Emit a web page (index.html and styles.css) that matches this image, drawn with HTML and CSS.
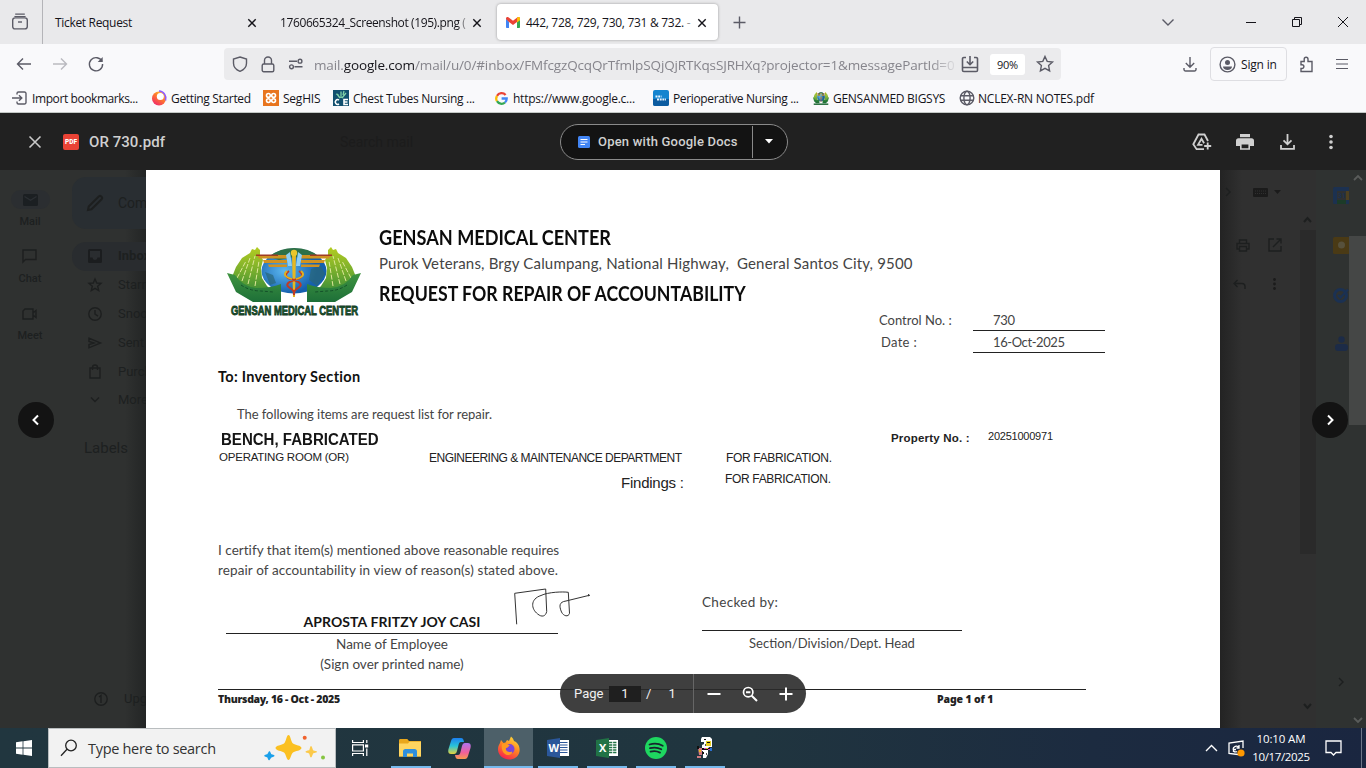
FILE: index.html
```html
<!DOCTYPE html>
<html lang="en">
<head>
<meta charset="utf-8">
<title>442, 728, 729, 730, 731 &amp; 732. - Gmail</title>
<link rel="stylesheet" href="styles.css">
</head>
<body>
<header class="tabs">
  <div class="tab-view"><svg width="18" height="18" viewBox="0 0 18 18" class="ln"><path d="M4.2 1.2h9.6M3.4 3.5h11.2" stroke-width="1.2"/><rect x="1.7" y="4.9" width="14.6" height="11" rx="2.4"/><path d="M7 9h4"/></svg></div>
  <div class="tab tab-a"><span class="t1">Ticket Request</span><svg class="x" viewBox="0 0 10 10"><path d="M1.3 1.3l7.4 7.4M8.7 1.3L1.3 8.7"/></svg></div>
  <div class="tab tab-b"><span class="t2">1760665324_Screenshot (195).png (</span><svg class="x" viewBox="0 0 10 10"><path d="M1.3 1.3l7.4 7.4M8.7 1.3L1.3 8.7"/></svg></div>
  <div class="tab tab-c"><svg width="14" height="11" viewBox="0 0 14 11"><path fill="#4285f4" d="M0 1.5V10c0 .6.4 1 1 1h2V4.5z"/><path fill="#34a853" d="M11 4.5V11h2c.6 0 1-.4 1-1V1.5z"/><path fill="#ea4335" d="M0 2V1.4C0 .2 1.5-.5 2.4.3L7 3.7 11.6.3C12.500-.5 14 .2 14 1.400V2l-3 3-4 2.900L3 5z"/><path fill="#fbbc04" d="M11 1v4.500l3-2.300V1.400C14 0 12.500-.4 11.600.3z"/></svg><span class="t3">442, 728, 729, 730, 731 &amp; 732. <i>-</i></span><svg class="x" viewBox="0 0 10 10"><path d="M1.3 1.3l7.4 7.4M8.7 1.3L1.3 8.7"/></svg></div>
  <svg class="plus ln" width="13" height="13" viewBox="0 0 13 13"><path d="M6.500 .5v12M.5 6.500h12"/></svg>
  <div class="win">
    <svg class="ln" width="14" height="9" viewBox="0 0 14 9"><path d="M1.500 1.500L7 7l5.500-5.500"/></svg>
    <svg width="12" height="12" viewBox="0 0 12 12" class="blk"><path d="M1 6.500h10"/></svg>
    <svg width="12" height="12" viewBox="0 0 12 12" class="blk"><path d="M1.500 3.500h7v7h-7zM3.500 3.500v-2h7v7h-2"/></svg>
    <svg width="12" height="12" viewBox="0 0 12 12" class="blk"><path d="M1 1l10 10M11 1L1 11"/></svg>
  </div>
</header>

<nav class="bar">
  <div class="hist">
    <svg class="ln" width="16" height="14" viewBox="0 0 16 14"><path d="M15 7H1.500M7 1.500L1.500 7 7 12.500"/></svg>
    <svg class="ln off" width="16" height="14" viewBox="0 0 16 14"><path d="M1 7h13.500M9 1.500L14.500 7 9 12.500"/></svg>
    <svg class="ln" width="16" height="16" viewBox="0 0 16 16"><path d="M14 5.500A6.600 6.600 0 1 0 14.600 8"/><path d="M14.700 1v5H9.700z" fill="#5b5b66" stroke="none"/></svg>
  </div>
  <div class="url">
    <svg class="ln" width="16" height="16" viewBox="0 0 16 16"><path d="M8 1L14.500 3v4.200c0 3.600-2.600 6.500-6.500 8.100C4.100 13.700 1.500 10.800 1.500 7.200V3z"/></svg>
    <svg class="ln" width="14" height="17" viewBox="0 0 14 17"><rect x="1.200" y="8" width="11.600" height="7.800" rx="1.500"/><path d="M3.500 8V4.500a3.500 3.500 0 0 1 7 0V8"/></svg>
    <svg class="ln" width="16" height="12" viewBox="0 0 16 12"><path d="M1 3.200h8M6.500 8.800h8"/><circle cx="12" cy="3.200" r="1.900"/><circle cx="3.500" cy="8.800" r="1.900"/></svg>
    <span class="addr">mail.<b>google.com</b>/mail/u/0/#inbox/FMfcgzQcqQrTfmlpSQjQjRTKqsSJRHXq?projector=1&amp;messagePartId=0</span>
    <svg class="ln" width="18" height="18" viewBox="0 0 18 18"><path d="M5 2.500H2.800a1.300 1.300 0 0 0-1.300 1.300v11.400a1.300 1.300 0 0 0 1.300 1.300h12.400a1.300 1.300 0 0 0 1.300-1.300V3.800a1.300 1.300 0 0 0-1.300-1.300H13M9 1v8.500M5.800 6.500L9 9.700l3.200-3.200M1.500 12.500h15" stroke-width="1.600"/></svg>
    <span class="zoom">90%</span>
    <svg class="ln" width="18" height="18" viewBox="0 0 18 18"><path d="M9 1.500l2.200 4.900 5.300.6-3.900 3.600 1 5.300L9 13.300l-4.600 2.600 1-5.300L1.500 7l5.300-.6z"/></svg>
  </div>
  <svg class="ln dl" width="14" height="15" viewBox="0 0 14 15"><path d="M7 0v10M2.800 6L7 10.200 11.200 6M1 11v1.500A1.500 1.500 0 0 0 2.500 14h9a1.500 1.500 0 0 0 1.500-1.500V11"/></svg>
  <div class="sign"><svg width="17" height="17" viewBox="0 0 17 17"><circle cx="8.500" cy="8.500" r="7.400" fill="none" stroke="#5b5b66" stroke-width="1.400"/><circle cx="8.500" cy="6.400" r="2.500" fill="#5b5b66"/><path d="M4 10.500h9c0 2-2 3.500-4.500 3.500S4 12.500 4 10.500z" fill="#5b5b66"/></svg><span>Sign in</span></div>
  <svg class="ln puz" width="16" height="17" viewBox="0 0 16 17"><path d="M3 5.500h3.200V3.200a1.900 1.900 0 0 1 3.800 0v2.300h4v10H3V12.500h1a1.900 1.900 0 0 0 0-3.800H3z"/></svg>
  <svg class="ln" width="12" height="12" viewBox="0 0 12 12"><path d="M0 1.500h12M0 6h12M0 10.500h12" stroke-width="1.200"/></svg>
</nav>

<div class="marks">
  <a><svg class="ln" width="16" height="14" viewBox="0 0 16 14"><path d="M5 3.500V2.500A1.500 1.500 0 0 1 6.500 1h6A1.500 1.500 0 0 1 14 2.500v9a1.500 1.500 0 0 1-1.500 1.500h-6A1.500 1.500 0 0 1 5 11.500V10.500M0 7h9.500M7 4.200L9.800 7 7 9.800"/></svg><span class="k1">Import bookmarks...</span></a>
  <a><svg width="16" height="16" viewBox="0 0 16 16"><defs><linearGradient id="ff" x1=".9" y1="0" x2=".2" y2="1"><stop offset="0" stop-color="#ffd83a"/><stop offset=".45" stop-color="#ff7a2b"/><stop offset="1" stop-color="#f0246e"/></linearGradient></defs><circle cx="8" cy="8.500" r="7" fill="url(#ff)"/><circle cx="9.300" cy="6.600" r="3.500" fill="#fff"/><path d="M8 1a7.300 7.300 0 0 1 6.500 9.500" fill="none" stroke="#9059ff" stroke-width="1.600"/></svg><span class="k2">Getting Started</span></a>
  <a><svg width="16" height="16" viewBox="0 0 16 16"><rect width="16" height="16" fill="#e8741e"/><g fill="none" stroke="#fff" stroke-width="1.600"><circle cx="5.400" cy="5.400" r="1.900"/><circle cx="10.600" cy="5.400" r="1.900"/><circle cx="5.400" cy="10.600" r="1.900"/><circle cx="10.600" cy="10.600" r="1.900"/></g></svg><span class="k3">SegHIS</span></a>
  <a><svg width="16" height="16" viewBox="0 0 16 16"><rect width="16" height="16" fill="#12506f"/><path d="M7 8L4 4M8 8V1.500M9 8l4-5M6 5l-3-1M10 5l1-4" stroke="#7fd0a8" stroke-width="1.300"/><path d="M6 10a2.400 2.400 0 1 0 0 4M15 9.500h-4v5h4M11 12h3.500" stroke="#fff" stroke-width="1.600" fill="none"/></svg><span class="k4">Chest Tubes Nursing ...</span></a>
  <a><svg width="13" height="13" viewBox="0 0 13 13" fill="none" stroke-width="2.300"><path d="M10.600 3A5.300 5.300 0 0 0 2 3.800" stroke="#ea4335"/><path d="M2 3.800a5.300 5.300 0 0 0 0 5.400" stroke="#fbbc05"/><path d="M2 9.200a5.300 5.300 0 0 0 8 1.300" stroke="#34a853"/><path d="M10 10.500a5.200 5.200 0 0 0 1.700-4H6.600" stroke="#4285f4"/></svg><span class="k5">https://www.google.c...</span></a>
  <a><svg width="16" height="16" viewBox="0 0 16 16"><rect width="16" height="16" rx="2" fill="#1484cf"/><path d="M0 9h16v5a2 2 0 0 1-2 2H2a2 2 0 0 1-2-2z" fill="#0b5ba0"/><path d="M2.500 6.500h6M4 9.500h9" stroke="#e6f4ff" stroke-width="2" stroke-dasharray="2 .7"/></svg><span class="k6">Perioperative Nursing ...</span></a>
  <a><svg width="16" height="13" viewBox="0 0 134 64" preserveAspectRatio="none"><use href="#emblem"/><path d="M6 60h122" stroke="#17622f" stroke-width="7"/></svg><span class="k7">GENSANMED BIGSYS</span></a>
  <a><svg class="ln" width="16" height="16" viewBox="0 0 16 16"><circle cx="8" cy="8" r="6.800"/><ellipse cx="8" cy="8" rx="3.100" ry="6.800"/><path d="M1.500 5.700h13M1.500 10.300h13"/></svg><span class="k8">NCLEX-RN NOTES.pdf</span></a>
</div>

<main class="viewer">
  <div class="vhead">
    <svg class="vx" width="14" height="14" viewBox="0 0 14 14"><path d="M1.500 1.500l11 11M12.500 1.500l-11 11" stroke="#c9c9c9" stroke-width="1.600"/></svg>
    <span class="pdf">PDF</span>
    <span class="fname">OR 730.pdf</span>
    <span class="ghost">Search mail</span>
    <div class="open">
      <svg width="12" height="12" viewBox="0 0 12 12"><rect width="12" height="12" rx="1.500" fill="#4285f4"/><path d="M2.500 3.500h7M2.500 6h7M2.500 8.500h4.500" stroke="#fff" stroke-width="1.200"/></svg>
      <span>Open with Google Docs</span>
      <em><svg width="8" height="5" viewBox="0 0 8 5"><path d="M0 0h8L4 4.500z" fill="#fff"/></svg></em>
    </div>
    <div class="acts">
      <svg width="20" height="18" viewBox="0 0 20 18" fill="none" stroke="#d0d0d0" stroke-width="1.800"><path d="M12 16.200H4.600L1.300 11.200 6.500 1.500h6L16 8M10.500 11.800H6L9.500 5.700l2.600 4.500M15.700 9.500v7M12.200 13h7"/></svg>
      <svg width="18" height="16" viewBox="0 0 18 16" fill="#d0d0d0"><path d="M4 0h10v3.200H4z"/><path d="M2.500 4.200h13A2.500 2.500 0 0 1 18 6.700V12h-4V9H4v3H0V6.700a2.500 2.500 0 0 1 2.500-2.500z"/><path d="M4.800 9.800h8.400V15H4.800z" fill="#212121" stroke="#d0d0d0" stroke-width="1.600"/></svg>
      <svg width="15" height="16" viewBox="0 0 15 16" fill="none" stroke="#d0d0d0" stroke-width="1.800"><path d="M7.500 0v10M3.500 6.300l4 4 4-4M1 11v3.800h13V11"/></svg>
      <svg width="4" height="16" viewBox="0 0 4 16" fill="#d0d0d0"><circle cx="2" cy="2.500" r="1.800"/><circle cx="2" cy="8" r="1.800"/><circle cx="2" cy="13.500" r="1.800"/></svg>
    </div>
  </div>

  <div class="stage">
    <aside class="gm">
      <div class="rail">
        <div class="r"><i class="chip"><svg width="15" height="12" viewBox="0 0 15 12"><rect width="15" height="12" rx="1.500" fill="#1b1f22"/><path d="M1.500 2.500l6 3.700 6-3.700" stroke="#2b2f33" stroke-width="1.300" fill="none"/></svg></i><b>Mail</b></div>
        <div class="r"><i><svg class="dk" width="15" height="15" viewBox="0 0 15 15"><path d="M1 1h13v9.500H3.500L1 13z"/></svg></i><b>Chat</b></div>
        <div class="r"><i><svg class="dk" width="15" height="12" viewBox="0 0 15 12"><path d="M3 1h8v10H1V3zM11 5l3-2.500v7L11 7"/></svg></i><b>Meet</b></div>
      </div>
      <div class="side">
        <div class="compose"><svg class="dk" width="18" height="18" viewBox="0 0 18 18"><path d="M2 16l.7-3.500L13 2.200a1.500 1.500 0 0 1 2 0l.8.8a1.500 1.500 0 0 1 0 2L5.500 15.300z" stroke-width="2"/></svg>Compose</div>
        <div class="f on"><svg width="14" height="14" viewBox="0 0 14 14"><rect width="14" height="14" rx="1.500" fill="#1b1d1f"/><path d="M2 2h10v6.500H9.500a2.500 2.500 0 0 1-5 0H2z" fill="#2a2d30"/></svg>Inbox</div>
        <div class="f"><svg class="dk" width="14" height="14" viewBox="0 0 14 14"><path d="M7 1l1.700 4 4.300.400-3.300 2.800 1 4.300L7 10.300l-3.700 2.200 1-4.300L1 5.400 5.300 5z"/></svg>Starred</div>
        <div class="f"><svg class="dk" width="14" height="14" viewBox="0 0 14 14"><circle cx="7" cy="7" r="6.200"/><path d="M7 3v4.200l3 2"/></svg>Snoozed</div>
        <div class="f"><svg class="dk" width="14" height="12" viewBox="0 0 14 12"><path d="M1 1.200L12.500 6 1 10.800V7.500L6 6 1 4.500z"/></svg>Sent</div>
        <div class="f"><svg class="dk" width="14" height="15" viewBox="0 0 14 15"><path d="M2 4h10v10H2zM4.500 6V3.500a2.500 2.500 0 0 1 5 0V6"/></svg>Purchases</div>
        <div class="f"><svg class="dk" width="14" height="8" viewBox="0 0 14 8"><path d="M3 1.500l4 4 4-4"/></svg>More</div>
        <div class="labels">Labels</div>
        <div class="f up"><svg class="dk" width="14" height="14" viewBox="0 0 14 14"><circle cx="7" cy="7" r="6.200"/><path d="M5 5l2-1.500V11"/></svg>Upgrade</div>
      </div>
    </aside>

    <article class="page">
      <div class="letter">
        <svg class="logo" width="134" height="74" viewBox="0 0 134 74">
          <defs>
            <linearGradient id="hd" x1="0" y1="0" x2="0" y2="1"><stop offset="0" stop-color="#b4cc22"/><stop offset=".5" stop-color="#7cb02c"/><stop offset="1" stop-color="#3c8e38"/></linearGradient>
            <linearGradient id="pm" x1="0" y1="0" x2="0" y2="1"><stop offset="0" stop-color="#3f9440"/><stop offset="1" stop-color="#1d6f38"/></linearGradient>
            <radialGradient id="gl" cx=".35" cy=".5"><stop offset="0" stop-color="#5cb8f0"/><stop offset="1" stop-color="#1560ae"/></radialGradient>
            <g id="hand">
              <path d="M30 0l3 3v5l3 5-2 8 1 10 5 8 4 4q-20 6-34-8L5 30l4-10 6-9 8-5 2-4 3 1z" fill="url(#hd)"/>
              <path d="M10 31l9-17M15 34l8-23M21 37l7-28M28 39l4-25" stroke="#dfe79a" stroke-width="1" fill="none" stroke-dasharray="5 1.500"/>
              <path d="M0 26l8 2q8 12 22 13 14 0 24-4v18H26L9 45z" fill="url(#pm)"/>
              <path d="M14 38q9 6 20 6l12 1" stroke="#14512a" stroke-width="1" fill="none" stroke-dasharray="3 2"/>
            </g>
          </defs>
          <g id="emblem">
            <ellipse cx="67" cy="24" rx="32.500" ry="22.500" fill="url(#gl)"/>
            <path d="M42 10q10-9 25-9 16 0 25 9l-10 2-15-2-15 3z" fill="#2d7048"/>
            <path d="M84 22l10-3 4 8-8 12-8-6zM38 25l8 3 3 8-6 2z" fill="#2a6676" opacity=".7"/>
            <use href="#hand"/>
            <use href="#hand" transform="matrix(-1 0 0 1 134 0)"/>
            <path d="M30 8h31v3.500H32zM36 13h24v3H37zM41 17.500h19v2.500H42zM73 8h31l-2 3.500H73zM74 13h24l-1 3H74zM74 17.500h19l-1 2.500H74z" fill="#cf9222"/>
            <path d="M29 7.500h22v1.500H29zM83 7.500h22v1.500H83z" fill="#a03c22"/>
            <path d="M59 8l4-3 2 14h-4zM75 8l-4-3-2 14h4z" fill="#8fd0f4"/>
            <path d="M65 6h4l-1 44h-2z" fill="#e6b822"/><circle cx="67" cy="6" r="3.200" fill="#e9c62c"/>
            <path d="M62 24q-8 6 5 9 11 4 4 8-5 3-4 7M72 24q8 6-5 9-11 4-4 8 5 3 4 7" fill="none" stroke="#c03a24" stroke-width="2"/>
            <path d="M60 24q-6 5 5 8M74 24q6 5-5 8" fill="none" stroke="#e0b020" stroke-width="1.800"/>
          </g>
          <text x="4" y="68" textLength="127" lengthAdjust="spacingAndGlyphs" class="lt">GENSAN MEDICAL CENTER</text>
        </svg>
        <div class="lh">
          <h1 class="n1">GENSAN MEDICAL CENTER</h1>
          <p>Purok Veterans, Brgy Calumpang, National Highway,&nbsp; General Santos City, 9500</p>
          <h1 class="n2">REQUEST FOR REPAIR OF ACCOUNTABILITY</h1>
        </div>
      </div>
      <dl class="meta">
        <dt class="c1">Control No. :</dt><dd class="c2">730</dd>
        <dt class="c3">Date :</dt><dd class="c4">16-Oct-2025</dd>
      </dl>
      <div class="to">To: Inventory Section</div>
      <div class="intro">The following items are request list for repair.</div>
      <div class="item">
        <strong>BENCH, FABRICATED</strong><b class="pl">Property No. :</b><span class="pn">20251000971</span>
      </div>
      <div class="dept"><span class="d1">OPERATING ROOM (OR)</span><span class="d2">ENGINEERING &amp; MAINTENANCE DEPARTMENT</span><span class="d3">FOR FABRICATION.</span></div>
      <div class="find"><span class="f1">Findings :</span><span class="d3">FOR FABRICATION.</span></div>
      <div class="cert"><p class="e1">I certify that item(s) mentioned above reasonable requires</p><p class="e2">repair of accountability in view of reason(s) stated above.</p></div>
      <div class="signs">
        <div class="emp"><b>APROSTA FRITZY JOY CASI</b><span>Name of Employee</span><span>(Sign over printed name)</span>
          <svg class="ink" width="80" height="40" viewBox="0 0 80 40"><path d="M3.700 37.300L1.700 6.300 32.700 2l1 22.500c-1 5-5 6-9 2.500C18 22 17 12 28 8.500 35 5 50 4.500 55.300 5.300l1.200 21c-1 4-6 3-8-1.300C46 19 46 15 53 14L76.300 8.300M75 7.300l1.600 1-1 1"/></svg>
        </div>
        <div class="head"><span class="chk">Checked by:</span><span class="sec">Section/Division/Dept. Head</span></div>
      </div>
      <footer class="foot"><b class="w1">Thursday, 16 - Oct - 2025</b><b class="w2">Page 1 of 1</b></footer>
    </article>

    <aside class="rt">
      <div class="mid">
        <div class="m1"><svg class="dk" width="6" height="10" viewBox="0 0 6 10"><path d="M1 1l4 4-4 4"/></svg><svg width="15" height="9" viewBox="0 0 15 9"><rect width="15" height="9" rx="1" fill="#1b1b1b"/><path d="M2 3h11M2 5.500h11" stroke="#303030" stroke-dasharray="1 1"/></svg><svg width="7" height="4" viewBox="0 0 7 4"><path d="M0 0h7L3.500 4z" fill="#1b1b1b"/></svg></div>
        <div class="m2"><svg class="dk" width="14" height="13" viewBox="0 0 14 13"><path d="M3.500 4V1h7v3M3.500 10H1V4.500h12V10h-2.500M3.500 7.500h7V12h-7z"/></svg><svg class="dk" width="14" height="14" viewBox="0 0 14 14"><path d="M6 1H1v12h12V8M8.500 1H13v4.500M13 1L5 9"/></svg></div>
        <div class="m3"><svg class="dk" width="13" height="10" viewBox="0 0 13 10"><path d="M4.500 1L1 4.500 4.500 8M1 4.500h8a3 3 0 0 1 3 3V10"/></svg><svg width="3" height="12" viewBox="0 0 3 12" fill="#1b1b1b"><circle cx="1.500" cy="1.500" r="1.400"/><circle cx="1.500" cy="6" r="1.400"/><circle cx="1.500" cy="10.500" r="1.400"/></svg></div>
      </div>
      <div class="sb1"><svg class="dk" width="9" height="6" viewBox="0 0 9 6"><path d="M1 5l3.500-4L8 5" stroke-width="2"/></svg><i></i><svg class="dk" width="9" height="6" viewBox="0 0 9 6"><path d="M1 1l3.500 4L8 1" stroke-width="2"/></svg></div>
      <div class="apps">
        <svg width="17" height="17" viewBox="0 0 17 17"><rect width="17" height="17" rx="1.500" fill="#1c3150"/><path d="M13 4h4v9h-4z" fill="#4d4020"/><path d="M4 13h9v4H4z" fill="#1c3b28"/><rect x="4" y="4" width="9" height="9" fill="#2e3133"/><text x="4.800" y="11" font-size="7" class="cal">31</text></svg>
        <svg width="17" height="17" viewBox="0 0 17 17"><rect width="17" height="17" rx="1.500" fill="#4a3a15"/><circle cx="8.500" cy="8" r="3.500" fill="#57513c"/></svg>
        <svg width="16" height="16" viewBox="0 0 16 16"><circle cx="7.500" cy="8.500" r="6" fill="none" stroke="#1b3152" stroke-width="3"/><path d="M5 8l2.500 2.500L15 2.500" fill="none" stroke="#1b3152" stroke-width="2.400"/></svg>
        <svg width="13" height="15" viewBox="0 0 13 15" fill="#1c2b47"><circle cx="6.500" cy="3.500" r="3.200"/><rect y="8" width="13" height="7" rx="3"/></svg>
        <svg class="dk last" width="6" height="10" viewBox="0 0 6 10"><path d="M1 1l4 4-4 4"/></svg>
      </div>
      <div class="sb2"><svg class="lt2" width="10" height="6" viewBox="0 0 10 6"><path d="M1 5l4-4 4 4"/></svg><i></i><svg class="lt2" width="10" height="6" viewBox="0 0 10 6"><path d="M1 1l4 4 4-4"/></svg></div>
    </aside>

    <button class="arrow prev"><svg width="8" height="12" viewBox="0 0 8 12"><path d="M6 1.500L1.500 6 6 10.500"/></svg></button>
    <button class="arrow next"><svg width="8" height="12" viewBox="0 0 8 12"><path d="M2 1.500L6.500 6 2 10.500"/></svg></button>
    <div class="pager">
      <span class="pg">Page</span><span class="in">1</span><span class="sl">/</span><span class="tot">1</span>
      <div class="zm"><svg width="14" height="14" viewBox="0 0 14 14"><path d="M.5 7h13"/></svg><svg width="16" height="16" viewBox="0 0 16 16"><circle cx="6.200" cy="6.200" r="4.700" stroke-width="1.700"/><path d="M9.700 9.700l5.300 5.300M4 6.200h4.400"/></svg><svg width="14" height="14" viewBox="0 0 14 14"><path d="M.5 7h13M7 .5v13"/></svg></div>
    </div>
  </div>
</main>

<footer class="task">
  <div class="start"><svg width="16" height="16" viewBox="0 0 16 16" fill="#fff"><path d="M0 2.200l6.600-.9v6.300H0zM7.400 1.200L16 0v7.600H7.400zM0 8.400h6.600v6.300L0 13.800zM7.400 8.400H16V16l-8.600-1.200z"/></svg></div>
  <div class="find-box"><svg width="18" height="18" viewBox="0 0 18 18" fill="none" stroke="#222" stroke-width="1.300"><circle cx="11" cy="6.500" r="5.300"/><path d="M7 10.300L1 16.800"/></svg><span>Type here to search</span>
    <svg class="spark" width="62" height="26" viewBox="0 0 62 26"><path d="M24.500 1c2 0 2.500 7 4.500 8.500s8.500 2 8.500 4.500-6.500 3-8.500 4.500-2.500 7.500-4.500 7.500-2.500-6-4.500-7.500S11.500 16.500 11.500 14s6.500-3 8.500-4.500S22.500 1 24.500 1z" fill="#fbc021"/><path d="M47 12c1 0 1.500 3.500 2.200 4.200s3.800.500 3.800 1.600-3.200 1-3.800 1.700S48 23.500 47 23.500s-1.300-3.400-2-4-3.500-.6-3.500-1.700 3-1 3.700-1.600S46 12 47 12z" fill="#fbc94a"/><path d="M5.500 18l1.200 2.800 3 1-3 1.200L5 25.500l-1.200-2.700L1 21.800l2.800-1z" fill="#1ba0ea" stroke="#1ba0ea" stroke-width="1.500" stroke-linejoin="round"/><circle cx="40.700" cy="3.800" r="2" fill="#f0622d"/><circle cx="59" cy="23.500" r="2" fill="#85c441"/></svg>
  </div>
  <div class="ic tv"><svg width="17" height="16" viewBox="0 0 17 16" fill="none" stroke="#fff" stroke-width="1.200"><path d="M.600 0v2.500h10.800V0M.600 16v-2.500h10.800V16M.600 4.800h10.800v6.200H.600zM14.800 0v3M14.800 8.500V16"/><path d="M13 4.500h3.200v3H13z" fill="#fff" stroke="none"/></svg></div>
  <div class="ic run"><svg width="22" height="18" viewBox="0 0 22 18"><path d="M0 1.500C0 .7.500 0 1.300 0h7L10 2H22v15.500H0z" fill="#e9a71c"/><path d="M0 4.500h9l1.500-1.800H22V17.500H0z" fill="#ffd560"/><path d="M4 18v-5.500A2.500 2.500 0 0 1 6.500 10h9a2.500 2.500 0 0 1 2.500 2.500V18h-4v-3.500H8V18z" fill="#2f8fdd"/></svg></div>
  <div class="ic"><svg width="23" height="21" viewBox="0 0 23 21"><defs><linearGradient id="ca" x1="0" y1="0" x2="0" y2="1"><stop offset="0" stop-color="#1c7ff0"/><stop offset=".5" stop-color="#29c3d8"/><stop offset="1" stop-color="#e5d23c"/></linearGradient><linearGradient id="cb" x1="0" y1="0" x2="0" y2="1"><stop offset="0" stop-color="#b073f0"/><stop offset=".6" stop-color="#f0609a"/><stop offset="1" stop-color="#f79a4c"/></linearGradient></defs><path d="M6 0h7c2 0 2.500 1.500 3 4h-3c-1.500 0-2 1-2.500 3L9 13c-.5 2-1.500 3-3 3H3c-3 0-3-3-2.500-5L3 3c.600-2 1.500-3 3-3z" fill="url(#ca)"/><path d="M17 21h-7c-2 0-2.500-1.500-3-4h3c1.500 0 2-1 2.500-3L14 8c.5-2 1.500-3 3-3h3c3 0 3 3 2.500 5L20 18c-.6 2-1.500 3-3 3z" fill="url(#cb)"/></svg></div>
  <div class="ic run act"><svg width="24" height="24" viewBox="0 0 24 24"><defs><linearGradient id="fx" x1=".8" y1="0" x2=".3" y2="1"><stop offset="0" stop-color="#ffe03a"/><stop offset=".45" stop-color="#ff8a22"/><stop offset="1" stop-color="#f5204e"/></linearGradient></defs><path d="M4 4l2.500 3 2-.5L10 4l2 1 2-4.500c2 1.500 2.500 3 3 4.500l2 1c3 2.500 4 6 3.500 9.500C21.500 21 17 23.500 12 23.500S1.500 20 1 14C.8 10 2.500 8 3 7z" fill="url(#fx)"/><circle cx="12.500" cy="13" r="5" fill="#7b45d8"/><path d="M5 8c4-1 6 0 8 2-2 0-2 2-4 2-1 3 3 5 6 3.500 1 2-2 4-5 3.500-4-1-6-6-5-11z" fill="#ff9a20"/></svg></div>
  <div class="ic run"><svg width="22" height="20" viewBox="0 0 22 20"><path d="M12 2h10v16H12z" fill="#fff"/><path d="M13 4.500h7.500M13 7h7.500M13 9.500h7.500M13 12h7.500M13 14.500h7.500" stroke="#2b579a" stroke-width="1.200"/><path d="M0 2l13-2v20L0 18z" fill="#2b579a"/><text x="1.500" y="14" class="off-l">W</text></svg></div>
  <div class="ic run"><svg width="22" height="20" viewBox="0 0 22 20"><path d="M12 2h10v16H12z" fill="#fff"/><path d="M13 4.500h7.500M13 7h7.500M13 9.500h7.500M13 12h7.500M13 14.500h7.500" stroke="#217346" stroke-width="1.400" stroke-dasharray="3.300 .8"/><path d="M0 2l13-2v20L0 18z" fill="#217346"/><text x="3" y="14" class="off-l">X</text></svg></div>
  <div class="ic run"><svg width="22" height="22" viewBox="0 0 22 22"><circle cx="11" cy="11" r="11" fill="#1ed760"/><path d="M4.500 7.500c4.500-1.300 9.500-.9 13.200 1.200M5 11.200c4-1.100 8-.700 11.300 1.100M5.500 14.600c3.300-.9 6.700-.6 9.500 1" fill="none" stroke="#17262d" stroke-width="1.800" stroke-linecap="round"/></svg></div>
  <div class="ic run"><svg width="18" height="24" viewBox="0 0 18 24"><path d="M6 1h8l2 2v8h-3l-1 2v5l-2 4H7v-7H6V9l2-1V6H5V3z" fill="#fff"/><path d="M10 5h5v5h-5z" fill="#e8d020"/><path d="M11 6h3v1h-3zM8 3h2v1H8z" fill="#111"/><path d="M2 12h4v7H3zM1 20h4v2H1z" fill="#d07a80"/><path d="M1 10h2v3H1zM6 12h9v2H6zM6 16h2v2H6z" fill="#111"/><path d="M8 12h2v1H8zM12 13h2v1h-2z" fill="#e040c0"/><path d="M3 14h2v2H3zM10 12h2v1h-2z" fill="#e8b820"/><path d="M14 12h2v3h-2z" fill="#2a70d0"/><path d="M10 17h1v2h-1zM9 8h1v2H9z" fill="#555"/></svg></div>
  <div class="tray">
    <svg width="13" height="8" viewBox="0 0 13 8" fill="none" stroke="#fff" stroke-width="1.400"><path d="M1 7l5.500-5.500L12 7"/></svg>
    <svg width="17" height="17" viewBox="0 0 17 17" fill="none" stroke="#fff" stroke-width="1.300"><path d="M10 14.500L1 13.500V3l14-2v7M5 9.500c0-3 4-4.500 6-2M11 5v3H8.500M5.500 12V9.500H8M5.500 11c1 1.200 2.500 1 3.500.5"/><circle cx="13" cy="13" r="3.600" fill="#ff9800" stroke="none"/></svg>
    <div class="clock"><span>10:10 AM</span><span class="dt">10/17/2025</span></div>
    <svg width="17" height="16" viewBox="0 0 17 16" fill="none" stroke="#fff" stroke-width="1.300"><path d="M1 1h15v11.500h-5L8.500 15 6 12.500H1z"/></svg>
    <i></i>
  </div>
</footer>
</body>
</html>
```
FILE: styles.css
```css
*{box-sizing:border-box;margin:0;padding:0}
body{width:1366px;height:768px;overflow:hidden;display:flex;flex-direction:column;font:12px/16px "Open Sans","Noto Sans",sans-serif;color:#15141a;background:#f9f9fb}
svg{flex:none;display:block;overflow:visible}
span,b,p,h1,strong{white-space:nowrap}
.ln{fill:none;stroke:#5b5b66;stroke-width:1.4}
.blk{fill:none;stroke:#15141a;stroke-width:1}
.x{width:10px;height:10px;stroke:#15141a;stroke-width:1.4}

/* tab strip */
.tabs{height:44px;background:#e9e9eb;display:flex;align-items:center}
.tab-view{width:43px;height:44px;border-right:1px solid #b4b4b8;display:flex;align-items:center;padding-left:11px}
.tab{display:flex;align-items:center;height:36px;color:#15141a;padding-top:1px}
.tab-a{width:228px;padding-left:12px;padding-right:14px;justify-content:space-between}
.tab-b{width:226px;padding-left:9px;padding-right:15px;justify-content:space-between}
.tab-c{width:221px;padding-left:9px;padding-right:11px;justify-content:space-between;background:#fff;border-radius:4px;box-shadow:0 0 3px rgba(0,0,0,.35)}
.t1{letter-spacing:-.32px}
.t2{letter-spacing:-.39px;width:188px;overflow:hidden;-webkit-mask:linear-gradient(90deg,#000 178px,transparent 190px);mask:linear-gradient(90deg,#000 178px,transparent 190px)}
.t3{letter-spacing:-.29px;width:168px;margin-left:3px}
.t3 i{font-style:normal;color:#999}
.plus{margin-left:15px}
.win{margin-left:auto;display:flex;align-items:center;gap:34px;padding-right:17px}
.win svg:first-child{margin-right:36px}

/* navigation bar */
.bar{height:40px;display:flex;align-items:center;padding-left:16px}
.hist{display:flex;align-items:center;gap:20px;width:208px}
.off{opacity:.4}
.url{width:837px;height:32px;background:#ebebed;border-radius:4px;display:flex;align-items:center;padding-left:8px}
.url svg:nth-child(2){margin-left:13px}
.url svg:nth-child(3){margin-left:13px}
.addr{font-size:13.5px;line-height:20px;letter-spacing:-.13px;color:#86858c;width:643px;margin:2px 0 0 10px;overflow:hidden;-webkit-mask:linear-gradient(90deg,#000 615px,transparent 645px);mask:linear-gradient(90deg,#000 615px,transparent 645px)}
.addr b{font-weight:400;color:#15141a}
.addr + svg{margin-left:4px}
.zoom{width:35px;height:21px;line-height:22px;background:#fff;border-radius:3px;font-size:11px;letter-spacing:-.3px;text-align:center;margin:0 11px 0 11px}
.dl{margin-left:122px}
.sign{margin-left:13px;width:77px;height:34px;border:1px solid #dedee2;border-radius:4px;display:flex;align-items:center;padding-left:8px;letter-spacing:-.17px}
.sign span{margin:1px 0 0 5px}
.puz{margin-left:11px;margin-right:22px}

/* bookmarks */
.marks{height:29px;margin-bottom:-1px;display:grid;grid-template-columns:139px 112px 70px 162px 158px 160px 146px 200px;padding-left:12px;align-items:center}
.marks a{display:flex;align-items:center}
.marks a span{margin-left:4px}
.marks a svg{margin-top:-1px}
.marks .k1{letter-spacing:-.41px}
.marks .k2{letter-spacing:-.34px}
.marks .k3{letter-spacing:-.23px}
.marks .k4,.marks .k7{letter-spacing:-.28px}
.marks .k5{letter-spacing:-.25px;margin-left:5px}
.marks .k6{letter-spacing:-.35px}
.marks .k8{letter-spacing:-.23px;margin-left:3px}

/* attachment viewer */
.viewer{height:616px;border-top:1px solid #c3c8c5;display:flex;flex-direction:column}
.vhead{height:57px;background:#212121;display:flex;align-items:center;color:#d0d0d0;font-family:Roboto,sans-serif}
.vx{margin-left:28px}
.pdf{margin-left:21px;width:16px;height:16px;background:#ea4335;border-radius:2px;color:#fff;font:900 6.500px/16px Roboto,sans-serif;text-align:center}
.fname{margin-left:10px;font-size:15px;font-weight:500;letter-spacing:.06px;width:92px}
.ghost{color:#1c1c1c;font-size:14px;width:75px;margin-left:159px;margin-right:-2px}
.open{margin-left:147px;width:228px;height:36px;border:1px solid #8a8a8a;border-radius:18px;background:#131313;display:flex;align-items:center;padding-left:17px;font-size:13px;font-weight:500;letter-spacing:.21px}
.open span{margin-left:8px}
.open em{margin-left:14px;width:33px;height:32px;border-left:1px solid #8a8a8a;display:flex;align-items:center;justify-content:center}
.acts{margin-left:auto;display:flex;align-items:center;gap:24px;padding-right:33px}
.acts svg:nth-child(3){margin-left:2px}
.acts svg:nth-child(4){margin-left:10px}

.stage{height:558px;display:grid;grid-template-columns:146px 1074px 146px;position:relative;background:#2d302f}
.dk{fill:none;stroke:#1d1f1f;stroke-width:1.400}
.gm{display:flex;overflow:hidden;background:linear-gradient(90deg,#2f3130 125px,#232525);color:#1d2020;font-family:Roboto,sans-serif}
.rail{width:60px;flex:none;padding-top:20px;display:flex;flex-direction:column;gap:15px;align-items:center}
.r{height:42px;display:flex;flex-direction:column;align-items:center}
.r i{height:21px;display:flex;align-items:center}
.r .chip{background:#2b2e31;border-radius:12px;padding:0 12px}
.r b{font:500 11px/20px Roboto,sans-serif;margin-top:3px}
.side{width:240px;margin-left:12px;padding-top:7px;font-size:13px;flex:none}
.compose{height:52px;border-radius:14px;background:#292e32;display:flex;align-items:center;gap:14px;padding-left:14px;margin-bottom:13px;font-size:14px}
.f{height:28.800px;display:flex;align-items:center;gap:16px;padding-left:16px}
.on{background:#292c2f;border-radius:14px;font-weight:700}
.labels{font-size:15px;margin:18px 0 0 12px;height:30px;line-height:30px}
.up{margin-top:222px;padding-left:22px}

/* document page */
.page{background:#fff;color:#444;font-family:Lato,"Open Sans",sans-serif;font-size:13px;padding:55px 0 0 72px;height:558px;overflow:hidden;position:relative}
.letter{display:flex;height:83px}
.logo{margin:22px 18px 0 9px}
.lt{font:900 12px "Liberation Sans",sans-serif;fill:#17622f;stroke:#12361e;stroke-width:.8}
.lh h1{font-size:20px;font-weight:700;color:#0c0c0c;height:24px;line-height:24px;transform-origin:0 50%}
.lh p{height:29px;line-height:29px;font-size:15px;letter-spacing:.17px}
.n1{transform:scaleX(.906)}
.lh .n2{height:30px;line-height:30px;transform:scaleX(.886)}
.meta{display:grid;grid-template-columns:94px 132px;grid-auto-rows:22px;padding-left:661px;padding-top:1px;line-height:23px}
.meta dd{border-bottom:1px solid #222;padding-left:20px}
.meta .c2{letter-spacing:-.3px}
.meta .c3{padding-left:2px;letter-spacing:.3px}
.meta .c4{letter-spacing:-.41px}
.to{margin-top:14px;height:21px;line-height:20px;font-size:14.500px;font-weight:700;color:#111;letter-spacing:.3px}
.intro{margin-top:16px;height:25px;line-height:21px;padding-left:19px;letter-spacing:-.05px}
.item,.dept,.find{display:flex;font-family:"Liberation Sans",Arial,sans-serif;color:#222}
.item{height:19px}
.item strong{width:670px;padding-left:3px;font-size:16px;line-height:22px;color:#151515;transform:scaleX(.94);transform-origin:3px 0}
.pl{width:100px;padding-left:3px;font-size:11.500px;line-height:18px;letter-spacing:.2px}
.pn{font-size:11px;line-height:15px;letter-spacing:-.23px}
.dept{height:18px;font-size:12px;line-height:21px}
.d1{width:211px;padding-left:1px;font-size:11.500px;line-height:19px;letter-spacing:-.22px}
.d2{width:297px;letter-spacing:-.51px}
.d3{letter-spacing:-.34px}
.find{height:24px;padding-left:403px}
.f1{width:104px;font-size:15px;line-height:33px;letter-spacing:-.23px}
.find .d3{font-size:12px;line-height:27px}
.cert{margin-top:50px;line-height:20px;font-size:13.500px}
.e1{letter-spacing:.03px}
.e2{letter-spacing:.11px}
.signs{display:flex;padding:13px 0 0 8px;height:109px}
.emp{width:332px;text-align:center;display:flex;flex-direction:column;position:relative;padding-top:18px;line-height:20px}
.emp b{font-size:14px;color:#151515;letter-spacing:.08px;height:23px;line-height:21px;border-bottom:1px solid #222}
.emp span{letter-spacing:0;font-size:13.500px}
.ink{position:absolute;left:287px;top:-6px;fill:none;stroke:#333;stroke-width:1}
.head{width:260px;margin-left:144px;line-height:20px;text-align:center}
.head span{display:block}
.chk{text-align:left;letter-spacing:.35px;font-size:13.500px;height:38px;line-height:19px;border-bottom:1px solid #222}
.sec{margin-top:2px}
.foot{width:868px;border-top:1px solid #222;display:flex;font:700 10.500px/18px "Noto Sans",sans-serif;color:#222}
.w1{letter-spacing:-.3px;width:719px}
.w2{letter-spacing:-.15px}

/* right side of the mailbox */
.rt{display:flex;background:linear-gradient(90deg,#232323,#303030 22px)}
.mid{width:79px}
.m1,.m2,.m3{display:flex;align-items:center}
.m1{padding:17px 0 0 5px}
.m1 svg:nth-child(2){margin:0 6px 0 22px}
.m2{padding:41px 0 0 16px;gap:18px}
.m3{padding:26px 0 0 13px;gap:27px}
.sb1{width:17px;display:flex;flex-direction:column;align-items:center;padding-top:47px}
.sb1 i{width:16px;height:324px;background:#2a2a2a;margin:7px 0 149px}
.apps{width:33px;background:#2f3231;display:flex;flex-direction:column;align-items:center;padding:17px 0 0 17px;gap:33px}
.apps .last{margin-top:293px}
.cal{font-family:Roboto,sans-serif;fill:#1c3150;font-weight:700}
.sb2{width:17px;background:#2f3231;display:flex;flex-direction:column;align-items:center;padding-top:5px}
.sb2 i{width:17px;height:189px;background:#454746;margin:55px 0 292px}
.lt2{fill:none;stroke:#5a5c5b;stroke-width:1.800}

/* floating controls */
.arrow{position:absolute;top:232px;width:36px;height:36px;border:0;border-radius:50%;background:#131313;display:flex;align-items:center;justify-content:center}
.arrow svg{fill:none;stroke:#fff;stroke-width:2}
.prev{left:18px}
.next{left:1312px}
.pager{position:absolute;left:560px;top:504px;width:246px;height:39px;border-radius:20px;background:rgba(42,42,42,.9);display:flex;align-items:center;color:#f1f1f1;font-family:Roboto,sans-serif;font-size:13px;padding-left:14px}
.pg{width:35px}
.in{width:32px;height:16px;background:#1f1f1f;text-align:center}
.sl{margin-left:5px}
.tot{margin-left:17px;width:26px}
.zm{border-left:1px solid #666;height:39px;display:flex;align-items:center;padding-left:13px;gap:21px;fill:none;stroke:#fff;stroke-width:2;margin-left:-1px}

/* taskbar */
.task{height:40px;display:flex;background:linear-gradient(90deg,#21363f,#20353f 55%,#1c2b40 80%,#1a2640);color:#fff}
.start{width:48px;display:flex;align-items:center;justify-content:center}
.find-box{width:288px;background:#f2f2f2;border:1px solid #b9bdbf;display:flex;align-items:center;padding-left:11px;color:#333;font-size:14.500px;letter-spacing:-.3px}
.find-box span{margin:1px 0 0 10px}
.spark{margin-left:48px;margin-top:-2px}
.ic{width:49px;display:flex;align-items:center;justify-content:center;position:relative}
.tv{width:48px}
.tv + .ic{width:52px;padding-right:1px;margin-right:-1px}
.run::after{content:"";position:absolute;left:4.500px;right:4.500px;bottom:0;height:2px;background:#76b9ed}
.tv + .run::after{left:7px;right:5px}
.act{background:#4d6069}
.act::after{left:0;right:0}
.off-l{font:700 11px "Open Sans",sans-serif;fill:#fff}
.tray{margin-left:auto;display:flex;align-items:center}
.tray svg:nth-child(1){margin-left:1px}
.tray svg:nth-child(2){margin-left:10px}
.clock{width:78px;display:flex;flex-direction:column;align-items:center;font-size:11.500px;line-height:18px;letter-spacing:-.13px;margin-left:-3px}
.dt{letter-spacing:-.34px}
.clock + svg{margin-left:5px}
.tray i{width:1px;height:40px;background:#6c7688;margin:0 4px 0 19px}
```
